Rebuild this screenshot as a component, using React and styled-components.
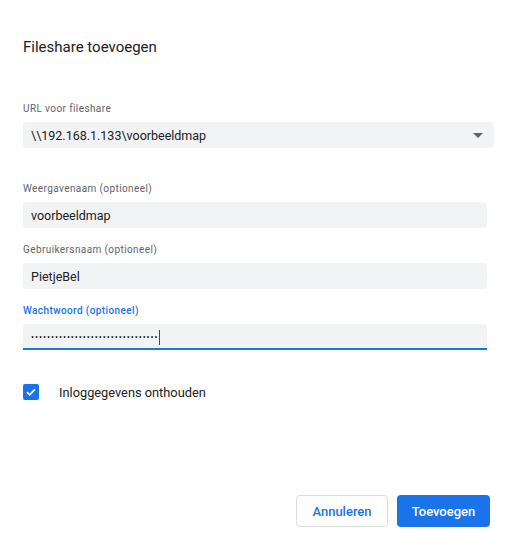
import React, { useState } from "react";
import styled, { createGlobalStyle } from "styled-components";

const GlobalStyle = createGlobalStyle`
  html, body {
    margin: 0;
    padding: 0;
    background: #fff;
  }
  body {
    font-family: Roboto, "Noto Sans", Arial, sans-serif;
    -webkit-font-smoothing: antialiased;
  }
`;

const Dialog = styled.div`
  display: flex;
  flex-direction: column;
  height: 100vh;
  box-sizing: border-box;
  padding: 37px 15px 19px 23px;
  background: #fff;
`;

const Title = styled.h2`
  margin: 0 0 46px;
  font-size: 15px;
  line-height: 20px;
  font-weight: 400;
  color: #202124;
`;

const Field = styled.div`
  display: flex;
  flex-direction: column;
  gap: 7px;
  width: ${({ wide }) => (wide ? "471px" : "464px")};
  margin-bottom: ${({ gap }) => (gap === undefined ? 16 : gap)}px;
`;

const Label = styled.label`
  font-size: 10px;
  line-height: 12px;
  letter-spacing: 0.4px;
  color: ${({ focused }) => (focused ? "#1a73e8" : "#5f6368")};
  font-weight: ${({ focused }) => (focused ? 500 : 400)};
`;

const InputBox = styled.div`
  display: flex;
  align-items: center;
  height: 26px;
  box-sizing: border-box;
  padding: 0 8px;
  background: #f1f3f4;
  border-radius: 4px;
  font-size: 12.5px;
  color: #202124;
  border-bottom: ${({ focused }) => (focused ? "2px solid #1a73e8" : "none")};
  border-bottom-left-radius: ${({ focused }) => (focused ? "0" : "4px")};
  border-bottom-right-radius: ${({ focused }) => (focused ? "0" : "4px")};
  padding-top: ${({ focused }) => (focused ? "2px" : "0")};
`;

const SelectBox = styled(InputBox)`
  justify-content: space-between;
  padding-right: 11px;
`;

const Arrow = styled.span`
  width: 0;
  height: 0;
  border-left: 5px solid transparent;
  border-right: 5px solid transparent;
  border-top: 5px solid #5f6368;
`;

const Dots = styled.span`
  font-size: 9px;
  letter-spacing: 0.95px;
  color: #202124;
`;

const Caret = styled.span`
  display: inline-block;
  width: 1px;
  height: 15px;
  background: #174ea6;
`;

const CheckRow = styled.div`
  display: flex;
  align-items: center;
  gap: 20px;
  margin-top: 34px;
  font-size: 12.8px;
  color: #202124;
  cursor: pointer;
`;

const CheckBox = styled.span`
  display: flex;
  align-items: center;
  justify-content: center;
  width: 16px;
  height: 16px;
  border-radius: 2px;
  background: ${({ checked }) => (checked ? "#1a73e8" : "#fff")};
  border: ${({ checked }) => (checked ? "none" : "2px solid #5f6368")};
  box-sizing: border-box;
`;

const Footer = styled.div`
  display: flex;
  justify-content: flex-end;
  gap: 9px;
  margin-top: auto;
  padding-right: 4px;
`;

const Button = styled.button`
  height: 32px;
  width: ${({ w }) => w}px;
  box-sizing: border-box;
  border-radius: 4px;
  font-family: Roboto, Arial, sans-serif;
  font-size: 13px;
  font-weight: 500;
  cursor: pointer;
  border: ${({ primary }) => (primary ? "none" : "1px solid #dadce0")};
  background: ${({ primary }) => (primary ? "#1a73e8" : "#fff")};
  color: ${({ primary }) => (primary ? "#fff" : "#1a73e8")};
`;

const App = () => {
  const [remember, setRemember] = useState(true);

  return (
    <>
      <GlobalStyle />
      <Dialog>
        <Title>Fileshare toevoegen</Title>

        <Field wide gap={35}>
          <Label>URL voor fileshare</Label>
          <SelectBox>
            <span>\\192.168.1.133\voorbeeldmap</span>
            <Arrow />
          </SelectBox>
        </Field>

        <Field>
          <Label>Weergavenaam (optioneel)</Label>
          <InputBox>voorbeeldmap</InputBox>
        </Field>

        <Field>
          <Label>Gebruikersnaam (optioneel)</Label>
          <InputBox>PietjeBel</InputBox>
        </Field>

        <Field gap={0}>
          <Label focused>Wachtwoord (optioneel)</Label>
          <InputBox focused>
            <Dots>{"•".repeat(32)}</Dots>
            <Caret />
          </InputBox>
        </Field>

        <CheckRow onClick={() => setRemember(!remember)}>
          <CheckBox checked={remember}>
            {remember && (
              <svg width="12" height="12" viewBox="0 0 12 12">
                <path d="M2 6.2l2.6 2.6L10 3.4" fill="none" stroke="#fff" strokeWidth="1.8" />
              </svg>
            )}
          </CheckBox>
          <span>Inloggegevens onthouden</span>
        </CheckRow>

        <Footer>
          <Button w={92}>Annuleren</Button>
          <Button primary w={93}>Toevoegen</Button>
        </Footer>
      </Dialog>
    </>
  );
};

export default App;
